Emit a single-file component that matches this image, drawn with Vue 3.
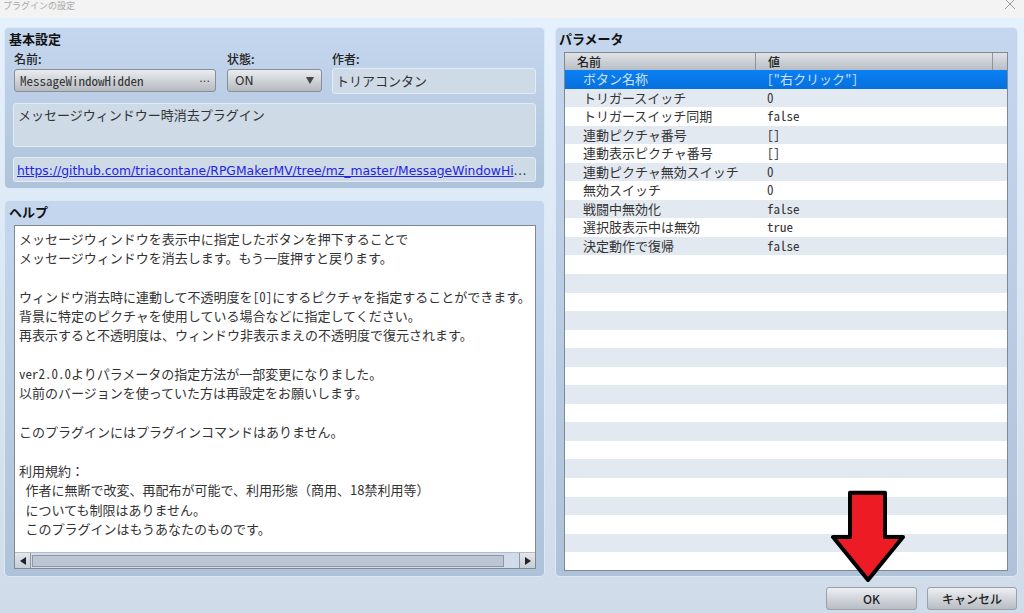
<template>
  <div class="dialog">
    <div class="titlebar">
      <span class="title">プラグインの設定</span>
      <svg class="close" width="12" height="12" viewBox="0 0 12 12">
        <path d="M1 1 L11 11 M11 1 L1 11" stroke="#9a9a9a" stroke-width="1" fill="none" />
      </svg>
    </div>

    <div class="content">
      <div class="columns">
        <div class="left">
          <section class="panel basic">
            <h2>基本設定</h2>
            <div class="fields">
              <div class="field name-field">
                <label>名前:</label>
                <div class="btn-input">
                  <span class="mono">MessageWindowHidden</span>
                  <span class="dots">···</span>
                </div>
              </div>
              <div class="field state-field">
                <label>状態:</label>
                <div class="btn-input">
                  <span class="on">ON</span>
                  <svg width="8" height="7" viewBox="0 0 8 7"><path d="M0 0 H8 L4 7 Z" fill="#444" /></svg>
                </div>
              </div>
              <div class="field author-field">
                <label>作者:</label>
                <div class="readonly author">トリアコンタン</div>
              </div>
            </div>
            <div class="readonly desc">メッセージウィンドウー時消去プラグイン</div>
            <div class="readonly url">
              <a class="link">https://github.com/triacontane/RPGMakerMV/tree/mz_master/MessageWindowHi</a><span class="more">…</span>
            </div>
          </section>

          <section class="panel help">
            <h2>ヘルプ</h2>
            <div class="help-box">
              <div class="help-text">
                <p>メッセージウィンドウを表示中に指定したボタンを押下することで</p>
                <p>メッセージウィンドウを消去します。もう一度押すと戻ります。</p>
                <p>&nbsp;</p>
                <p>ウィンドウ消去時に連動して不透明度を<span class="mono">[0]</span>にするピクチャを指定することができます。</p>
                <p>背景に特定のピクチャを使用している場合などに指定してください。</p>
                <p>再表示すると不透明度は、ウィンドウ非表示まえの不透明度で復元されます。</p>
                <p>&nbsp;</p>
                <p><span class="mono">ver2.0.0</span>よりパラメータの指定方法が一部変更になりました。</p>
                <p>以前のバージョンを使っていた方は再設定をお願いします。</p>
                <p>&nbsp;</p>
                <p>このプラグインにはプラグインコマンドはありません。</p>
                <p>&nbsp;</p>
                <p>利用規約：</p>
                <p class="indent">作者に無断で改変、再配布が可能で、利用形態（商用、18禁利用等）</p>
                <p class="indent">についても制限はありません。</p>
                <p class="indent">このプラグインはもうあなたのものです。</p>
              </div>
              <div class="hscroll">
                <div class="arrow arrow-l">
                  <svg width="6" height="8" viewBox="0 0 6 8"><path d="M6 0 V8 L0 4 Z" fill="#223" /></svg>
                </div>
                <div class="track"><div class="thumb"></div></div>
                <div class="arrow arrow-r">
                  <svg width="6" height="8" viewBox="0 0 6 8"><path d="M0 0 V8 L6 4 Z" fill="#223" /></svg>
                </div>
              </div>
            </div>
          </section>
        </div>

        <section class="panel params">
          <h2>パラメータ</h2>
          <div class="table">
            <div class="thead">
              <div class="th th-name">名前</div>
              <div class="th th-value">値</div>
              <div class="th th-end"></div>
            </div>
            <div class="tbody">
              <div
                v-for="(row, i) in rows"
                :key="i"
                class="row"
                :class="{ selected: i === 0, alt: i > 0 && i % 2 === 1 }"
              >
                <span class="cell-name">{{ row[0] }}</span>
                <span class="cell-value mono">{{ row[1] }}</span>
              </div>
            </div>
          </div>
        </section>
      </div>

      <div class="footer">
        <button class="btn btn-ok">OK</button>
        <button class="btn btn-cancel">キャンセル</button>
      </div>
    </div>

    <!-- 注釈の赤い矢印 -->
    <svg class="callout" width="84" height="100" viewBox="0 0 84 100">
      <path d="M21 3.7 H56 V48 H74 L39 91 L4 48 H21 Z" fill="#ed1c24" stroke="#000" stroke-width="4" stroke-linejoin="round" />
    </svg>
  </div>
</template>

<script setup>
const rows = [
  ['ボタン名称', '["右クリック"]'],
  ['トリガースイッチ', '0'],
  ['トリガースイッチ同期', 'false'],
  ['連動ピクチャ番号', '[]'],
  ['連動表示ピクチャ番号', '[]'],
  ['連動ピクチャ無効スイッチ', '0'],
  ['無効スイッチ', '0'],
  ['戦闘中無効化', 'false'],
  ['選択肢表示中は無効', 'true'],
  ['決定動作で復帰', 'false'],
  ...Array.from({ length: 17 }, () => ['', ''])
]
</script>

<style>
html, body { margin: 0; padding: 0; }
</style>

<style scoped>
.dialog {
  position: relative;
  width: 1024px;
  height: 613px;
  overflow: hidden;
  display: flex;
  flex-direction: column;
  font-family: "Noto Sans CJK JP", "DejaVu Sans", sans-serif;
  font-size: 13px;
  color: #333;
}
.titlebar {
  height: 18px;
  flex: none;
  background: #f3f3f3;
  position: relative;
  overflow: hidden;
}
.title {
  display: block;
  padding-left: 3px;
  font-size: 9px;
  line-height: 12px;
  color: #a8a8a8;
}
.close { position: absolute; right: 8px; top: -2px; }

.content {
  flex: 1;
  display: flex;
  flex-direction: column;
  padding: 9px 6px 3px 4px;
  background: linear-gradient(#e5f1fd, #cfdbe8);
}
.columns { flex: none; display: flex; gap: 10px; height: 550px; }
.left { width: 541px; flex: none; display: flex; flex-direction: column; gap: 11px; }

.panel {
  box-sizing: border-box;
  border: 1px solid #dde8f5;
  border-radius: 5px;
  background: linear-gradient(#c5d7ee, #aec3da);
  padding: 2px 8px 7px 9px;
}
h2 {
  margin: 0 0 0 -5px;
  font-size: 13px;
  line-height: 18px;
  font-weight: 700;
  color: #111;
}

.basic { height: 162px; }
.fields { display: flex; margin-top: 1px; }
.field { display: flex; flex-direction: column; }
.field label { font-size: 12px; line-height: 20px; height: 20px; font-weight: 500; color: #222; }
.name-field { width: 213px; }
.state-field { width: 105px; }
.author-field { flex: 1; }
.btn-input {
  box-sizing: border-box;
  height: 23px;
  display: flex;
  align-items: center;
  justify-content: space-between;
  padding: 0 6px 0 5px;
  border: 1px solid #8a8f96;
  border-radius: 3px;
  background: linear-gradient(#eaedf0, #b5bac0);
}
.name-field .btn-input { width: 202px; }
.state-field .btn-input { width: 95px; padding: 0 7px; }
/* Noto CJK の半角字形で等幅にする */
.mono {
  font-feature-settings: "hwid";
}
.dots { font-size: 10px; letter-spacing: -2px; color: #333; }
.on { font-family: "DejaVu Sans", sans-serif; font-size: 12px; }
.readonly {
  box-sizing: border-box;
  background: #cedae6;
  border: 1px solid #e3ecf6;
  border-radius: 3px;
  padding: 0 4px;
}
.author { height: 26px; line-height: 23px; margin-top: -1px; padding-left: 3px; }
.desc { height: 44px; margin: 9px 0 0 -1px; line-height: 22px; }
.url { height: 25px; margin: 10px 0 0 -1px; line-height: 23px; padding-left: 3px; white-space: nowrap; }
.link {
  font-family: "DejaVu Sans", sans-serif;
  font-size: 12.35px;
  color: #2424e8;
  text-decoration: underline;
}
.more { font-size: 12px; }

.help { flex: 1; }
.help-box {
  box-sizing: border-box;
  height: 344px;
  margin-top: 4px;
  border: 1px solid #808890;
  background: #fff;
  display: flex;
  flex-direction: column;
}
.help-text { flex: 1; padding: 2.5px 4px 0; overflow: hidden; }
.help-text p { margin: 0; line-height: 19.36px; white-space: nowrap; }
.help-text .indent { padding-left: 6.5px; }

.hscroll {
  flex: none;
  height: 15px;
  display: flex;
  background: #d1dcea;
  border-top: 1px solid #b5bcc5;
}
.arrow {
  box-sizing: border-box;
  width: 16px;
  flex: none;
  display: flex;
  align-items: center;
  justify-content: center;
  background: linear-gradient(#e4e7ea, #c8ced6);
}
.arrow-l { border-right: 1px solid #8f98a2; }
.arrow-r { border-left: 1px solid #8f98a2; }
.track { flex: 1; padding: 2px 15px 1px 1px; }
.thumb { height: 100%; box-sizing: border-box; background: #bcc5d3; border: 1px solid #8f98a2; }

.params { flex: 1; padding-left: 8px; padding-right: 9px; }
.table {
  box-sizing: border-box;
  height: 519px;
  margin-top: 4px;
  border: 1px solid #808890;
  background: #fff;
  overflow: hidden;
}
.thead { display: flex; height: 17px; }
.th {
  box-sizing: border-box;
  background: linear-gradient(#dfe3e8, #b9bec4);
  border-right: 1px solid #8f959c;
  font-size: 12px;
  font-weight: 500;
  line-height: 17px;
  color: #222;
}
.th-name { width: 191px; padding-left: 12px; }
.th-value { width: 237px; padding-left: 12px; }
.th-end { flex: 1; border-right: 0; }
.row {
  display: flex;
  height: 18.55px;
  line-height: 18.55px;
  white-space: nowrap;
  color: #333;
}
.row.alt { background: #e3e9f0; }
.row.selected { background: linear-gradient(#0a80f4, #0670dc); color: #cfe0f8; }
.cell-name { width: 184px; margin-left: 18px; }

.footer {
  flex: none;
  display: flex;
  justify-content: flex-end;
  gap: 10px;
  padding-top: 10px;
  padding-right: 1px;
}
.btn {
  box-sizing: border-box;
  height: 23px;
  padding: 0;
  border: 1px solid #9aa0a8;
  border-radius: 3px;
  background: linear-gradient(#eceff2, #b8bdc4);
  font-family: "Noto Sans CJK JP", sans-serif;
  font-size: 12px;
  font-weight: 500;
  color: #222;
}
.btn-ok { width: 91px; }
.btn-cancel { width: 90px; }

.callout { position: absolute; left: 829px; top: 489px; }
</style>
